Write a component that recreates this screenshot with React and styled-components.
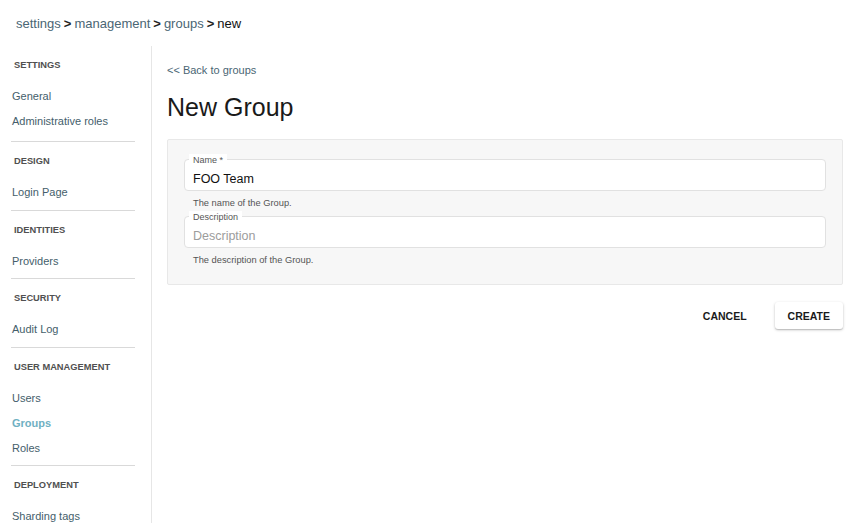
import styled, { createGlobalStyle } from 'styled-components';

const GlobalStyle = createGlobalStyle`
  body {
    margin: 0;
    background: #fff;
    font-family: "Liberation Sans", Arial, sans-serif;
  }
`;

const Page = styled.div`
  min-height: 100vh;
  display: flex;
  flex-direction: column;
`;

const Breadcrumb = styled.div`
  height: 46px;
  display: flex;
  align-items: center;
  padding-left: 16px;
  font-size: 13px;
  color: #111;
`;

const Crumb = styled.span`
  color: ${(p) => (p.current ? '#111' : '#4a6674')};
`;

const Sep = styled.span`
  margin: 0 3px;
  font-weight: 700;
  color: #222;
`;

const Body = styled.div`
  flex: 1;
  display: flex;
`;

const Sidebar = styled.nav`
  width: 124px;
  flex-shrink: 0;
  padding: 12px 16px 0 11px;
  border-right: 1px solid #e6e6e6;
`;

const Section = styled.div`
  padding: ${(p) => (p.first ? '0' : '12px')} 0 ${(p) => (p.first ? '7px' : '4.5px')};
  border-bottom: ${(p) => (p.last ? 'none' : '1px solid #d9d9d9')};
`;

const SectionTitle = styled.div`
  padding-left: 3px;
  font-size: 9.3px;
  line-height: 14px;
  font-weight: 700;
  text-transform: uppercase;
  color: #505050;
  margin-bottom: 12px;
`;

const NavItem = styled.div`
  padding-left: 1px;
  font-size: 11px;
  line-height: 25px;
  color: ${(p) => (p.active ? '#6fb0c2' : '#445e6b')};
  font-weight: ${(p) => (p.active ? 700 : 400)};
  white-space: nowrap;
`;

const Main = styled.main`
  flex: 1;
  padding: 17px 7px 0 15px;
`;

const BackLink = styled.div`
  font-size: 11px;
  line-height: 14px;
  color: #4a6674;
`;

const Title = styled.h1`
  margin: 15px 0 17px;
  font-size: 25px;
  line-height: 30px;
  font-weight: 400;
  color: #1a1a1a;
`;

const Card = styled.div`
  background: #f7f7f7;
  border: 1px solid #e8e8e8;
  border-radius: 2px;
  padding: 19px 16px 18px;
`;

const Field = styled.div`
  & + & {
    margin-top: 7px;
  }
`;

const Outline = styled.div`
  position: relative;
  height: 30px;
  background: #fff;
  border: 1px solid #e1e1e1;
  border-radius: 4px;
`;

const FloatLabel = styled.span`
  position: absolute;
  top: -6px;
  left: 4px;
  padding: 0 4px;
  background: #fff;
  font-size: 9px;
  line-height: 12px;
  color: #555;
`;

const Input = styled.input`
  box-sizing: border-box;
  width: 100%;
  height: 30px;
  border: none;
  outline: none;
  background: transparent;
  padding: 11px 8px 3px;
  font-family: inherit;
  font-size: 12.5px;
  line-height: 16px;
  color: #111;
  &::placeholder {
    color: #9c9c9c;
  }
`;

const Helper = styled.div`
  margin-top: 6px;
  padding-left: 9px;
  font-size: 9.3px;
  line-height: 12px;
  color: #555;
`;

const Actions = styled.div`
  display: flex;
  justify-content: flex-end;
  align-items: center;
  gap: 16px;
  margin-top: 17px;
`;

const Button = styled.button`
  height: 27px;
  padding: 0 ${(p) => (p.raised ? '13px' : '12px')};
  border: none;
  border-radius: 3px;
  background: ${(p) => (p.raised ? '#fff' : 'transparent')};
  box-shadow: ${(p) =>
    p.raised ? '0 1px 3px rgba(0,0,0,0.22), 0 1px 1px rgba(0,0,0,0.12)' : 'none'};
  font-family: inherit;
  font-size: 10.5px;
  font-weight: 700;
  color: #1a1a1a;
  text-transform: uppercase;
  cursor: pointer;
`;

const nav = [
  { title: 'Settings', items: ['General', 'Administrative roles'] },
  { title: 'Design', items: ['Login Page'] },
  { title: 'Identities', items: ['Providers'] },
  { title: 'Security', items: ['Audit Log'] },
  { title: 'User Management', items: ['Users', 'Groups', 'Roles'] },
  { title: 'Deployment', items: ['Sharding tags'] },
];

export default function App() {
  return (
    <Page>
      <GlobalStyle />
      <Breadcrumb>
        <Crumb>settings</Crumb>
        <Sep>&gt;</Sep>
        <Crumb>management</Crumb>
        <Sep>&gt;</Sep>
        <Crumb>groups</Crumb>
        <Sep>&gt;</Sep>
        <Crumb current>new</Crumb>
      </Breadcrumb>
      <Body>
        <Sidebar>
          {nav.map((section, i) => (
            <Section key={section.title} first={i === 0} last={i === nav.length - 1}>
              <SectionTitle>{section.title}</SectionTitle>
              {section.items.map((item) => (
                <NavItem key={item} active={item === 'Groups'}>
                  {item}
                </NavItem>
              ))}
            </Section>
          ))}
        </Sidebar>
        <Main>
          <BackLink>&lt;&lt; Back to groups</BackLink>
          <Title>New Group</Title>
          <Card>
            <Field>
              <Outline>
                <FloatLabel>Name *</FloatLabel>
                <Input defaultValue="FOO Team" />
              </Outline>
              <Helper>The name of the Group.</Helper>
            </Field>
            <Field>
              <Outline>
                <FloatLabel>Description</FloatLabel>
                <Input placeholder="Description" />
              </Outline>
              <Helper>The description of the Group.</Helper>
            </Field>
          </Card>
          <Actions>
            <Button>Cancel</Button>
            <Button raised>Create</Button>
          </Actions>
        </Main>
      </Body>
    </Page>
  );
}
